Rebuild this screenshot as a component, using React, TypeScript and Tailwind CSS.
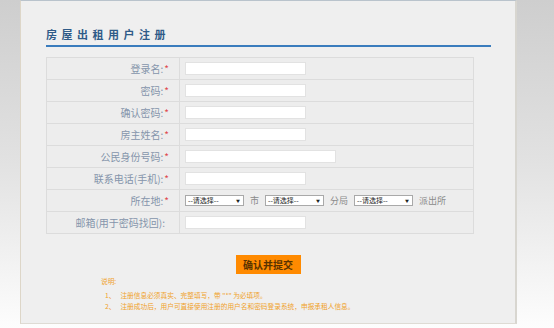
export default function App() {
  const rows: { label: string; required: boolean; kind: 'input' | 'wide' | 'select' }[] = [
    { label: '登录名:', required: true, kind: 'input' },
    { label: '密码:', required: true, kind: 'input' },
    { label: '确认密码:', required: true, kind: 'input' },
    { label: '房主姓名:', required: true, kind: 'input' },
    { label: '公民身份号码:', required: true, kind: 'wide' },
    { label: '联系电话(手机):', required: true, kind: 'input' },
    { label: '所在地:', required: true, kind: 'select' },
    { label: '邮箱(用于密码找回):', required: false, kind: 'input' },
  ];

  const font = { fontFamily: '"Noto Sans CJK SC", "Liberation Sans", sans-serif' };

  const Select = () => (
    <div className="w-[59px] h-[11px] bg-white border border-[#a9a9a9] flex items-center justify-between pl-[2px] pr-[3px] text-[7px] leading-none text-[#222]">
      <span>--请选择--</span>
      <span className="text-[4px]">▼</span>
    </div>
  );

  return (
    <div className="w-[554px] h-[328px] overflow-hidden bg-gradient-to-b from-[#cecece] via-[#e2e2e2] to-[#fdfdfd]" style={font}>
      <div className="ml-[20px] w-[497px] h-[324px] bg-[#efefef] border-t border-t-[#b9c3cc] border-l border-l-[#ddd6c8] border-r-2 border-r-[#d8d6d0] border-b border-b-[#dedbd4]">
        <div className="pl-[25px] pt-[26px]">
          <div className="text-[11px] leading-[14px] font-bold tracking-[4.5px] text-[#2f5b88]">房屋出租用户注册</div>
          <div className="mt-[4px] w-[445px] h-[2px] bg-[#3a7cbd]" />

          <div className="mt-[10px] w-[428px] border-t border-l border-r border-[#dcdcdc] bg-[#ededed]">
            {rows.map((r) => (
              <div key={r.label} className="flex h-[22px] border-b border-[#dcdcdc]">
                <div className="w-[133px] shrink-0 border-r border-[#dcdcdc] flex items-center justify-end pr-[10px] text-[10px] text-[#8595ab]">
                  <span>{r.label}</span>
                  {r.required ? <span className="text-[#e0484f] ml-[1px]">*</span> : <span className="w-[4px]" />}
                </div>
                <div className="flex items-center pl-[5px] gap-[6px] text-[9px] text-[#8a8a8a]">
                  {r.kind === 'input' && <div className="w-[121px] h-[13px] bg-white border border-[#e2e2e2]" />}
                  {r.kind === 'wide' && <div className="w-[151px] h-[13px] bg-white border border-[#e2e2e2]" />}
                  {r.kind === 'select' && (
                    <>
                      <Select />
                      <span>市</span>
                      <Select />
                      <span>分局</span>
                      <Select />
                      <span>派出所</span>
                    </>
                  )}
                </div>
              </div>
            ))}
          </div>
        </div>

        <div className="flex justify-center mt-[21px]">
          <div className="w-[65px] h-[19px] bg-[#ff8a00] flex items-center justify-center text-[10px] font-bold text-[#5a3200]">确认并提交</div>
        </div>

        <div className="ml-[80px] mt-[2px] text-[6.7px] leading-[11px] text-[#f0a22a]">
          <div>说明:</div>
          <div className="mt-[3px] ml-[4px] flex gap-[5px]"><span>1、</span><span>注册信息必须真实、完整填写，带 "*" 为必填项。</span></div>
          <div className="ml-[4px] flex gap-[5px]"><span>2、</span><span>注册成功后，用户可直接使用注册的用户名和密码登录系统，申报承租人信息。</span></div>
        </div>
      </div>
    </div>
  );
}
